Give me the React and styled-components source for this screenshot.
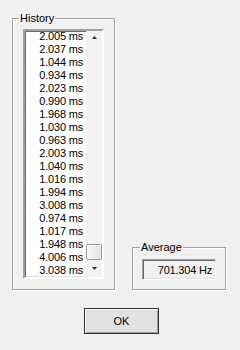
import React from 'react'
import styled, { createGlobalStyle } from 'styled-components'

const history = [
  '2.005 ms', '2.037 ms', '1.044 ms', '0.934 ms', '2.023 ms', '0.990 ms',
  '1.968 ms', '1.030 ms', '0.963 ms', '2.003 ms', '1.040 ms', '1.016 ms',
  '1.994 ms', '3.008 ms', '0.974 ms', '1.017 ms', '1.948 ms', '4.006 ms', '3.038 ms',
]

const Global = createGlobalStyle`
  html, body {
    margin: 0;
    background: #f0f0f0;
  }
  body {
    width: 240px;
    height: 350px;
    overflow: hidden;
    font-family: "Liberation Sans", Arial, sans-serif;
    font-size: 11px;
    color: #000;
  }
`

const Dialog = styled.div`
  display: flex;
  flex-direction: column;
  padding: 18px 0 0 12px;
`

const Groups = styled.div`
  display: flex;
  align-items: flex-end;
  gap: 17px;
`

const Group = styled.div`
  position: relative;
  border: 1px solid #a0a0a0;
  box-shadow: inset 1px 1px 0 #fff, 1px 1px 0 #fff;
  padding: ${p => p.$pad};
`

const Caption = styled.span`
  position: absolute;
  top: -7px;
  left: ${p => p.$left}px;
  padding: 0 1px;
  background: #f0f0f0;
  line-height: 13px;
`

const ListBox = styled.div`
  display: flex;
  width: 81px;
  height: 250px;
  box-sizing: border-box;
  background: #fff;
  border: 2px solid;
  border-color: #a0a0a0 #fff #fff #a0a0a0;
  box-shadow: inset 1px 1px 0 #696969, inset -1px -1px 0 #e3e3e3;
`

const Items = styled.div`
  flex: 1;
  display: flex;
  flex-direction: column;
  justify-content: flex-end;
  overflow: hidden;
  padding-right: 3px;
  letter-spacing: -0.2px;
`

const Item = styled.div`
  line-height: 13px;
  height: 13px;
  flex-shrink: 0;
  text-align: right;
  white-space: nowrap;
`

const ScrollBar = styled.div`
  width: 16px;
  display: flex;
  flex-direction: column;
  background: #f2f2f2;
  padding-bottom: 2px;
`

const Arrow = styled.div`
  height: 13px;
  display: flex;
  align-items: center;
  justify-content: center;
`

const Track = styled.div`
  flex: 1;
  display: flex;
  flex-direction: column;
  justify-content: flex-end;
`

const Thumb = styled.div`
  height: 16px;
  box-sizing: border-box;
  margin: 0 0 2px 0;
  border: 1px solid #9c9c9c;
  border-radius: 2px;
  background: linear-gradient(to right, #f6f6f6, #e4e4e4);
  box-shadow: inset 1px 1px 0 #fff;
`

const Field = styled.div`
  width: 74px;
  height: 21px;
  box-sizing: border-box;
  border: 1px solid;
  border-color: #a0a0a0 #fff #fff #a0a0a0;
  box-shadow: inset 1px 1px 0 #696969, inset -1px -1px 0 #e3e3e3;
  display: flex;
  align-items: center;
  justify-content: flex-end;
  padding-right: 3px;
  letter-spacing: -0.2px;
`

const Buttons = styled.div`
  display: flex;
  padding: 18px 0 0 72px;
`

const Button = styled.button`
  width: 75px;
  height: 26px;
  box-sizing: border-box;
  font: inherit;
  color: #000;
  background: #e1e1e1;
  border: 1px solid #303030;
  box-shadow: inset 1px 1px 0 #fff, inset -1px -1px 0 #a0a0a0;
  padding: 0;
`

function Triangle({ up }) {
  return (
    <svg width="5" height="3" viewBox="0 0 5 3">
      <path d={up ? 'M0 3 L2.5 0 L5 3 Z' : 'M0 0 L2.5 3 L5 0 Z'} fill="#333" />
    </svg>
  )
}

export default function App() {
  return (
    <Dialog>
      <Global />
      <Groups>
        <Group $pad="10px 10px 10px 10px">
          <Caption $left={6}>History</Caption>
          <ListBox>
            <Items>
              {history.map((h, i) => <Item key={i}>{h}</Item>)}
            </Items>
            <ScrollBar>
              <Arrow><Triangle up /></Arrow>
              <Track><Thumb /></Track>
              <Arrow><Triangle /></Arrow>
            </ScrollBar>
          </ListBox>
        </Group>
        <Group $pad="11px 9px 9px 9px">
          <Caption $left={7}>Average</Caption>
          <Field>701.304 Hz</Field>
        </Group>
      </Groups>
      <Buttons>
        <Button>OK</Button>
      </Buttons>
    </Dialog>
  )
}
